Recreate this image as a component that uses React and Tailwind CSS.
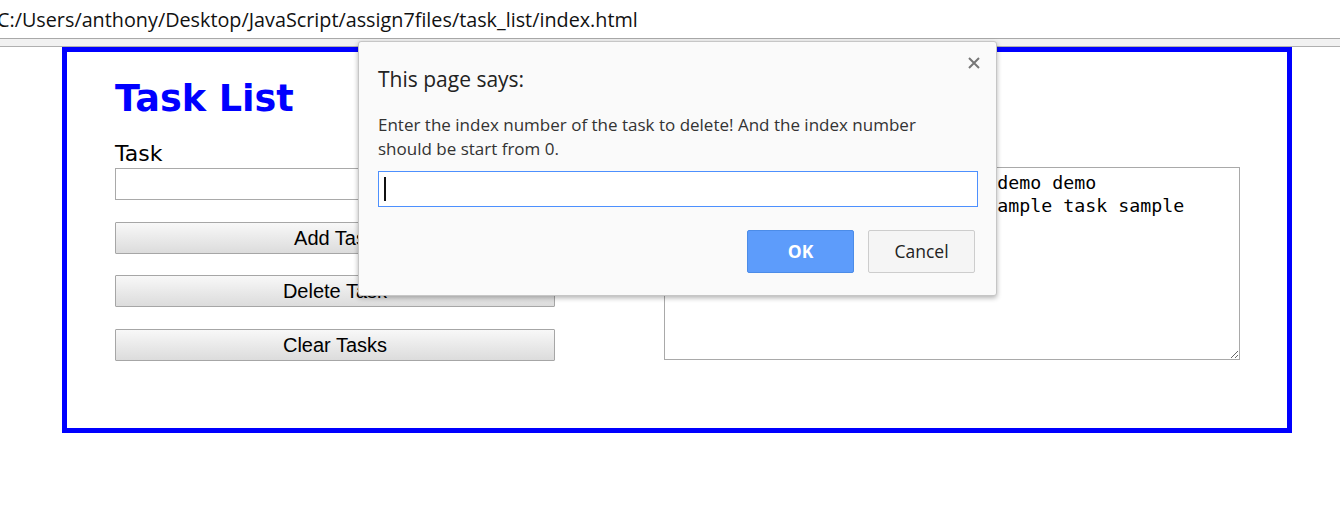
function Dialog() {
  return (
    <div className="absolute left-[358px] top-[41px] w-[639px] h-[255px] bg-[#fafafa] border border-[#c6c6c6] rounded-[3px] shadow-[0_2px_5px_rgba(0,0,0,0.3)] px-[19px] pt-[23px] font-['Open_Sans',sans-serif]">
      <button className="absolute right-[14px] top-[13px] w-[16px] h-[16px] flex items-center justify-center">
        <svg width="12" height="12" viewBox="0 0 12 12">
          <path d="M1 1L11 11M11 1L1 11" stroke="#777" strokeWidth="2" />
        </svg>
      </button>
      <div className="text-[21px] leading-[28px] text-[#222]">This page says:</div>
      <div className="mt-[20px] text-[17px] leading-[24px] text-[#333] w-[580px]">
        Enter the index number of the task to delete! And the index number should be start from 0.
      </div>
      <div className="mt-[10px] w-[600px] h-[36px] bg-white border border-[#4d90fe] flex items-center pl-[5px]">
        <div className="w-[2px] h-[24px] bg-[#111]"></div>
      </div>
      <div className="mt-[23px] flex justify-end gap-[14px] pr-[2px]">
        <button className="w-[107px] h-[43px] bg-[#5d9cfb] border border-[#4c8ce8] rounded-[2px] text-white font-bold text-[17.5px]">OK</button>
        <button className="w-[107px] h-[43px] bg-[#f5f5f5] border border-[#cdcdcd] rounded-[2px] text-[#222] text-[17.5px]">Cancel</button>
      </div>
    </div>
  )
}

const btn = "block w-[440px] h-[32px] border border-[#a6a6a6] rounded-[1px] bg-gradient-to-b from-[#f8f8f8] to-[#dcdcdc] text-black text-[20px] font-['Liberation_Sans',Arial,sans-serif] leading-none"

export default function App() {
  return (
    <div className="relative w-[1340px] h-[509px] bg-white overflow-hidden">
      <div className="h-[39px] border-b border-[#a9a9a9] flex items-center">
        <span className="ml-[-3px] text-[19.8px] text-[#111] font-['Open_Sans',sans-serif] leading-none pt-[2px]">C:/Users/anthony/Desktop/JavaScript/assign7files/task_list/index.html</span>
      </div>
      <div className="h-[8px] bg-[#f1f1f1] border-b border-[#b0b0b0]"></div>
      <div className="ml-[62px] w-[1230px] h-[386px] border-[5px] border-[#0000ff] flex">
        <div className="pl-[48px] pt-[26px] w-[597px]">
          <h1 className="text-[36.6px] leading-[42px] font-bold text-[#0000ff] font-['DejaVu_Sans',Verdana,sans-serif]">Task List</h1>
          <div className="mt-[21px] text-[22px] leading-[26px] text-black font-['DejaVu_Sans',Verdana,sans-serif]">Task</div>
          <input className="mt-[1px] block w-[440px] h-[32px] border border-[#a9a9a9] outline-none" type="text" />
          <button className={btn + " mt-[22px]"}>Add Task</button>
          <button className={btn + " mt-[21px]"}>Delete Task</button>
          <button className={btn + " mt-[22px]"}>Clear Tasks</button>
        </div>
        <div className="pt-[115px]">
          <textarea
            className="block w-[576px] h-[193px] border border-[#a9a9a9] px-[2px] pt-[3px] text-[18.3px] leading-[23px] text-black font-['DejaVu_Sans_Mono',monospace] outline-none"
            defaultValue={"demo demo demo demo demo demo demo demo\ntask sample task sample task sample task sample"}
          />
        </div>
      </div>
      <Dialog />
    </div>
  )
}
